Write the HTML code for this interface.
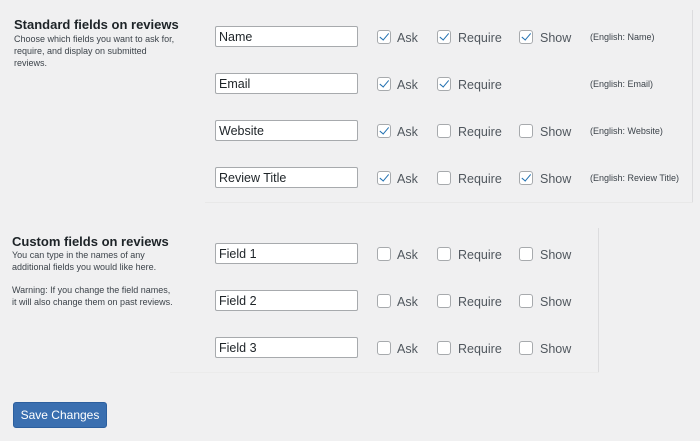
<!DOCTYPE html>
<html><head><style>
body{margin:0;width:700px;height:441px;background:#f0f0f1;font-family:"Liberation Sans",sans-serif;position:relative;overflow:hidden;color:#1d2327}
.a{position:absolute}
h3{position:absolute;margin:0;font-size:13px;font-weight:bold;color:#1d2327}
.d{position:absolute;font-size:9px;line-height:12px;color:#3c434a;white-space:nowrap}
.in{position:absolute;left:215px;height:19px;border:1px solid #a7aaad;border-radius:2px;background:#fff;font-size:12.5px;line-height:20px;padding-left:3px;width:138px}
.cb{position:absolute;width:12px;height:12px;border:1px solid #a7aaad;border-radius:3px;background:#fff}
.cb.c::after{content:"";position:absolute;left:3.5px;top:0px;width:3.5px;height:7.5px;border:solid #2271b1;border-width:0 1.6px 1.6px 0;transform:rotate(40deg)}
.l{position:absolute;font-size:12.5px;color:#50575e;margin-top:2px}
.e{position:absolute;left:590px;font-size:9px;color:#3c434a;margin-top:1px}
</style></head><body>
<div class="a" style="left:692px;top:10px;width:1px;height:192px;background:#dcdcde"></div>
<div class="a" style="left:205px;top:202px;width:488px;height:1px;background:#e8e8e8"></div>
<div class="a" style="left:598px;top:228px;width:1px;height:144px;background:#dcdcde"></div>
<div class="a" style="left:170px;top:372px;width:429px;height:1px;background:#ebebeb"></div>

<h3 style="left:14px;top:17px">Standard fields on reviews</h3>
<div class="d" style="left:14px;top:33px">Choose which fields you want to ask for,<br>require, and display on submitted<br>reviews.</div>

<h3 style="left:12px;top:234px">Custom fields on reviews</h3>
<div class="d" style="left:12px;top:249px">You can type in the names of any<br>additional fields you would like here.</div>
<div class="d" style="left:12px;top:284px">Warning: If you change the field names,<br>it will also change them on past reviews.</div>

<div class="in" style="top:26px">Name</div>
<div class="cb c" style="left:377px;top:30px"></div><div class="l" style="left:397px;top:29px">Ask</div>
<div class="cb c" style="left:437px;top:30px"></div><div class="l" style="left:458px;top:29px">Require</div>
<div class="cb c" style="left:519px;top:30px"></div><div class="l" style="left:540px;top:29px">Show</div>
<div class="e" style="top:31px">(English: Name)</div>

<div class="in" style="top:73px">Email</div>
<div class="cb c" style="left:377px;top:77px"></div><div class="l" style="left:397px;top:76px">Ask</div>
<div class="cb c" style="left:437px;top:77px"></div><div class="l" style="left:458px;top:76px">Require</div>
<div class="e" style="top:78px">(English: Email)</div>

<div class="in" style="top:120px">Website</div>
<div class="cb c" style="left:377px;top:124px"></div><div class="l" style="left:397px;top:123px">Ask</div>
<div class="cb" style="left:437px;top:124px"></div><div class="l" style="left:458px;top:123px">Require</div>
<div class="cb" style="left:519px;top:124px"></div><div class="l" style="left:540px;top:123px">Show</div>
<div class="e" style="top:125px">(English: Website)</div>

<div class="in" style="top:167px">Review Title</div>
<div class="cb c" style="left:377px;top:171px"></div><div class="l" style="left:397px;top:170px">Ask</div>
<div class="cb" style="left:437px;top:171px"></div><div class="l" style="left:458px;top:170px">Require</div>
<div class="cb c" style="left:519px;top:171px"></div><div class="l" style="left:540px;top:170px">Show</div>
<div class="e" style="top:172px">(English: Review Title)</div>

<div class="in" style="top:243px">Field 1</div>
<div class="cb" style="left:377px;top:247px"></div><div class="l" style="left:397px;top:246px">Ask</div>
<div class="cb" style="left:437px;top:247px"></div><div class="l" style="left:458px;top:246px">Require</div>
<div class="cb" style="left:519px;top:247px"></div><div class="l" style="left:540px;top:246px">Show</div>

<div class="in" style="top:290px">Field 2</div>
<div class="cb" style="left:377px;top:294px"></div><div class="l" style="left:397px;top:293px">Ask</div>
<div class="cb" style="left:437px;top:294px"></div><div class="l" style="left:458px;top:293px">Require</div>
<div class="cb" style="left:519px;top:294px"></div><div class="l" style="left:540px;top:293px">Show</div>

<div class="in" style="top:337px">Field 3</div>
<div class="cb" style="left:377px;top:341px"></div><div class="l" style="left:397px;top:340px">Ask</div>
<div class="cb" style="left:437px;top:341px"></div><div class="l" style="left:458px;top:340px">Require</div>
<div class="cb" style="left:519px;top:341px"></div><div class="l" style="left:540px;top:340px">Show</div>

<div class="a" style="left:13px;top:402px;width:92px;height:24px;background:#3a6fb0;border:1px solid #2c5f9e;border-radius:3px;color:#fff;font-size:12px;line-height:24px;text-align:center">Save Changes</div>
</body></html>
